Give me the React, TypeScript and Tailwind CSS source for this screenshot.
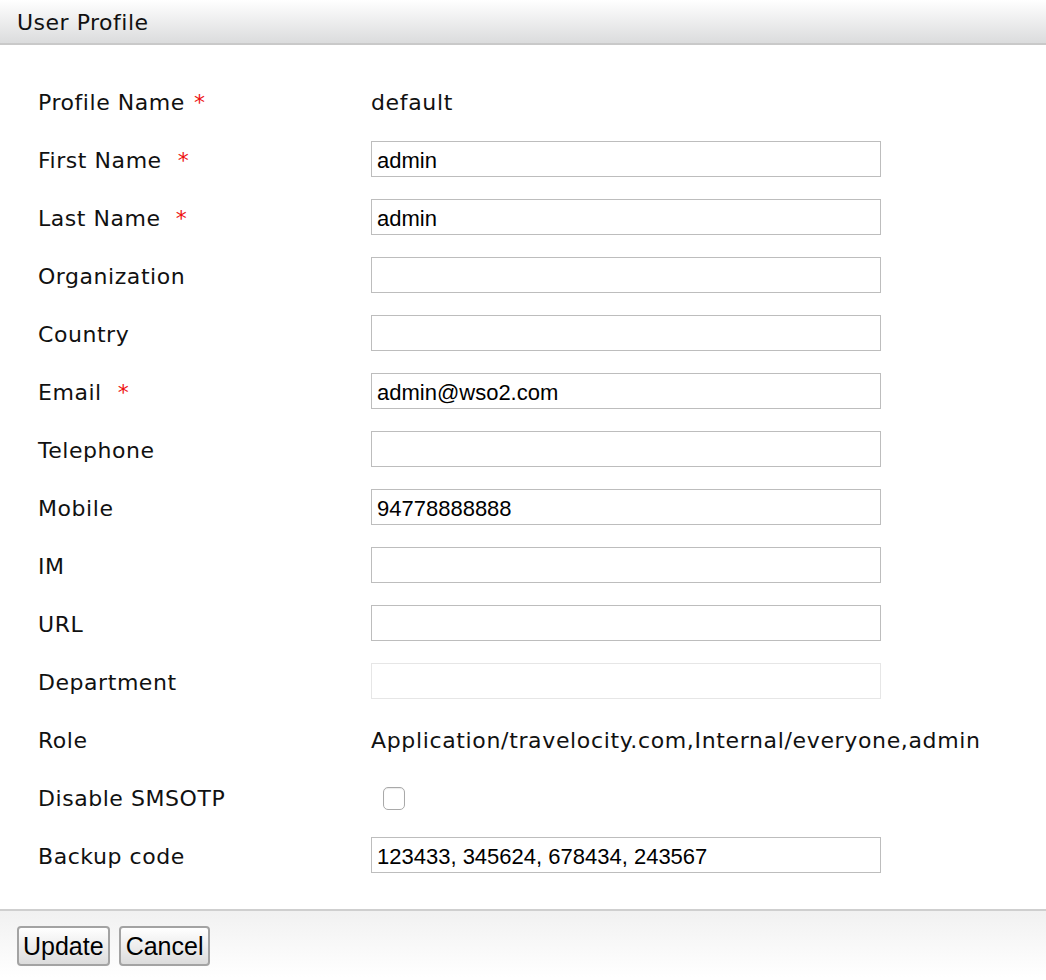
import React from "react";

type Row = {
  label: string;
  required?: boolean;
  gap?: string;
  kind: "text" | "input" | "disabled" | "checkbox";
  value?: string;
};

const ROWS: Row[] = [
  { label: "Profile Name", required: true, gap: "ml-[9px]", kind: "text", value: "default" },
  { label: "First Name", required: true, gap: "ml-[16px]", kind: "input", value: "admin" },
  { label: "Last Name", required: true, gap: "ml-[15px]", kind: "input", value: "admin" },
  { label: "Organization", kind: "input" },
  { label: "Country", kind: "input" },
  { label: "Email", required: true, gap: "ml-[16px]", kind: "input", value: "admin@wso2.com" },
  { label: "Telephone", kind: "input" },
  { label: "Mobile", kind: "input", value: "94778888888" },
  { label: "IM", kind: "input" },
  { label: "URL", kind: "input" },
  { label: "Department", kind: "disabled" },
  { label: "Role", kind: "text", value: "Application/travelocity.com,Internal/everyone,admin" },
  { label: "Disable SMSOTP", kind: "checkbox" },
  { label: "Backup code", kind: "input", value: "123433, 345624, 678434, 243567" },
];

const lucida = "font-['DejaVu_Sans',_'Noto_Sans',_sans-serif] text-[22px] text-[#111]";

function Field({ row }: { row: Row }) {
  if (row.kind === "text") {
    return <span className={`${lucida} pt-[3px] tracking-[0.65px]`}>{row.value}</span>;
  }
  if (row.kind === "checkbox") {
    return (
      <div className="ml-[12px] mt-[2px] w-[22px] h-[23px] rounded-[5px] border border-[#a9a9a9] bg-white shadow-[inset_0_1px_1px_rgba(0,0,0,0.08)]" />
    );
  }
  const disabled = row.kind === "disabled";
  return (
    <input
      readOnly
      defaultValue={row.value ?? ""}
      className={`w-[510px] h-[36px] pl-[5px] pt-[3px] border bg-white outline-none text-[22px] text-black font-['Liberation_Sans',_Arial,_sans-serif] ${
        disabled ? "border-[#e6e6e6]" : "border-[#bdbdbd]"
      }`}
    />
  );
}

export default function App() {
  return (
    <div className="w-[1046px] h-[980px] bg-white">
      <div className="h-[45px] flex items-center px-[17px] bg-gradient-to-b from-white to-[#dbdcdd] border-b-2 border-[#c9c9c9]">
        <span className="font-['DejaVu_Sans',_'Noto_Sans',_sans-serif] text-[22px] tracking-[0.5px] text-[#111] pt-[1px]">
          User Profile
        </span>
      </div>

      <div className="pt-[27px] pb-[25px]">
        {ROWS.map((row) => (
          <div key={row.label} className="h-[58px] flex items-center">
            <div className={`w-[371px] pl-[38px] pt-[3px] tracking-[0.55px] ${lucida}`}>
              {row.label}
              {row.required && <span className={`${row.gap} text-[#ee1111]`}>*</span>}
            </div>
            <Field row={row} />
          </div>
        ))}
      </div>

      <div className="border-t-2 border-[#cfcfcf] bg-gradient-to-b from-[#f1f1f1] to-white h-[68px] flex items-start gap-[9px] pl-[17px] pt-[15px]">
        <button className="h-[40px] px-[4px] rounded-[4px] border-2 border-[#a3a3a3] bg-gradient-to-b from-white to-[#dcdcdc] text-[25px] text-black font-['Liberation_Sans',_Arial,_sans-serif] leading-none">
          Update
        </button>
        <button className="h-[40px] px-[5px] rounded-[4px] border-2 border-[#a3a3a3] bg-gradient-to-b from-white to-[#dcdcdc] text-[25px] text-black font-['Liberation_Sans',_Arial,_sans-serif] leading-none">
          Cancel
        </button>
      </div>
    </div>
  );
}
